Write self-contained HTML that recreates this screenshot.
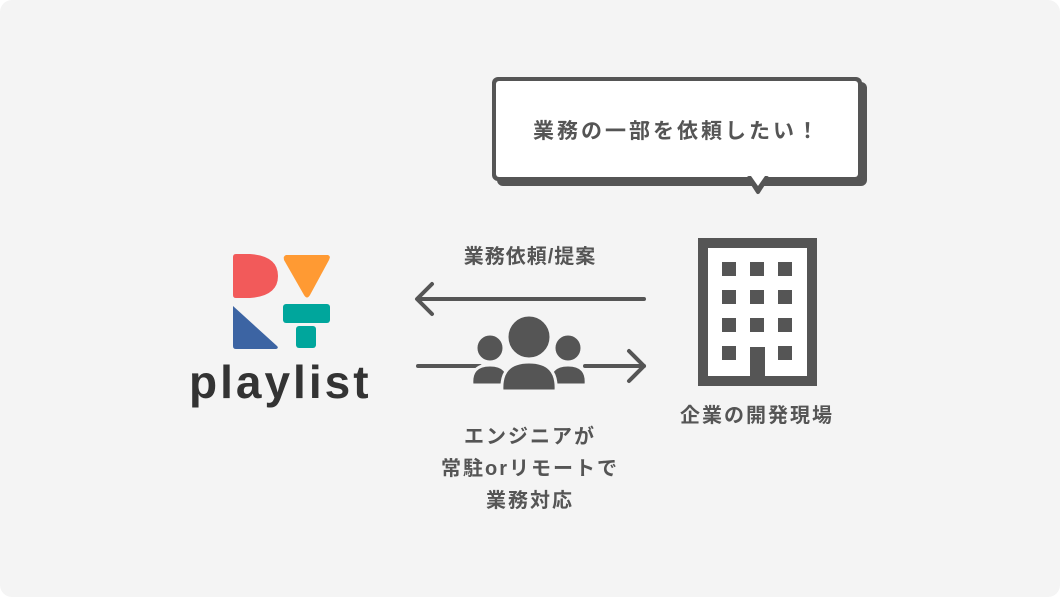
<!DOCTYPE html>
<html><head><meta charset="utf-8"><style>
body{margin:0;width:1060px;height:597px;background:#fff;overflow:hidden;font-family:"Liberation Sans","Noto Sans CJK JP",sans-serif;}
.bg{position:absolute;left:0;top:0;width:1060px;height:597px;background:#f4f4f4;border-radius:12px;}
.t{position:absolute;color:#555;font-weight:700;font-size:20px;letter-spacing:2px;text-align:center;white-space:nowrap;}
</style></head><body>
<div class="bg"></div>
<svg width="1060" height="597" style="position:absolute;left:0;top:0">
 <rect x="497" y="82" width="370" height="104" rx="6" fill="#555"/>
 <rect x="492" y="77" width="370" height="104" rx="6" fill="#555"/>
 <rect x="496" y="81" width="362" height="96" rx="3" fill="#fff"/>
 <path d="M749 178 L758 192 L767 178 Z" fill="#555" stroke="#555" stroke-width="4" stroke-linejoin="round"/>
 <path d="M751 176 L758 186 L765 176 Z" fill="#fff"/>
 <path d="M233 257 Q233 254 236 254 L250 254 Q278 256 278 276 Q278 296 250 298 L236 298 Q233 298 233 295 Z" fill="#f25a5a"/>
 <path d="M286 255 L328 255 Q331 256 329 260 L310 295 Q307 300 304 295 L284 260 Q283 256 286 255 Z" fill="#ff9a33"/>
 <path d="M233 306 L233 346 Q233 349 236 349 L276 349 Q279 348 277 346 Z" fill="#3c64a3"/>
 <rect x="283" y="304" width="47" height="19" rx="3" fill="#00a69c"/>
 <rect x="296" y="326" width="20" height="22" rx="3" fill="#00a69c"/>
 <g stroke="#555" stroke-width="4" stroke-linecap="round" fill="none" stroke-linejoin="round">
  <line x1="418" y1="299" x2="644" y2="299"/>
  <path d="M432 284 L417 299 L432 314"/>
  <line x1="418" y1="366" x2="480" y2="366"/>
  <line x1="585" y1="366" x2="644" y2="366"/>
  <path d="M629 351 L644 366 L629 381"/>
 </g>
 <g fill="#555" stroke="#f4f4f4" stroke-width="3">
  <circle cx="490" cy="348" r="14"/>
  <path d="M472 385 Q470 365 490 365 Q510 365 508 385 Z"/>
  <circle cx="568" cy="348" r="14"/>
  <path d="M550 385 Q548 365 568 365 Q588 365 586 385 Z"/>
  <circle cx="529" cy="337" r="22"/>
  <path d="M502 391 Q500 362 529 362 Q558 362 556 391 Z"/>
 </g>
 <rect x="703" y="243" width="109" height="138" fill="#fff" stroke="#555" stroke-width="10"/>
 <g fill="#555">
  <rect x="722" y="262" width="14" height="14"/><rect x="750" y="262" width="14" height="14"/><rect x="778" y="262" width="14" height="14"/>
  <rect x="722" y="290" width="14" height="14"/><rect x="750" y="290" width="14" height="14"/><rect x="778" y="290" width="14" height="14"/>
  <rect x="722" y="318" width="14" height="14"/><rect x="750" y="318" width="14" height="14"/><rect x="778" y="318" width="14" height="14"/>
  <rect x="722" y="346" width="14" height="14"/><rect x="750" y="347" width="15" height="38"/><rect x="778" y="346" width="14" height="14"/>
 </g>
</svg>
<div class="t" style="left:477px;width:400px;top:117px;font-size:21px;letter-spacing:3px;line-height:30px;">業務の一部を依頼したい！</div>
<div class="t" style="left:380px;width:300px;top:242px;line-height:30px;letter-spacing:1px;">業務依頼/提案</div>
<div class="t" style="left:607px;width:300px;top:401px;line-height:30px;">企業の開発現場</div>
<div class="t" style="left:380px;width:300px;top:421px;line-height:32px;">エンジニアが<br>常駐orリモートで<br>業務対応</div>
<div style="position:absolute;left:189px;top:352px;font-size:46px;font-weight:700;color:#333;letter-spacing:3px;line-height:60px;">playlist</div>
</body></html>
